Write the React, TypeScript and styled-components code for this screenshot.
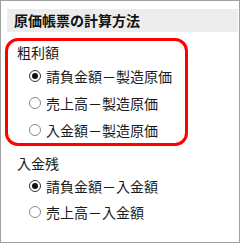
import React from 'react';
import styled, { createGlobalStyle } from 'styled-components';

const GlobalStyle = createGlobalStyle`
  html,
  body {
    margin: 0;
    padding: 0;
    background: #ffffff;
  }
  body {
    font-family: 'Noto Sans CJK JP', 'Noto Sans', sans-serif;
    color: #1a1a1a;
  }
`;

interface Option {
  label: string;
  checked?: boolean;
}

interface GroupData {
  title: string;
  options: Option[];
  highlight?: boolean;
}

const groups: GroupData[] = [
  {
    title: '粗利額',
    highlight: true,
    options: [
      { label: '請負金額－製造原価', checked: true },
      { label: '売上高－製造原価' },
      { label: '入金額－製造原価' },
    ],
  },
  {
    title: '入金残',
    options: [{ label: '請負金額－入金額', checked: true }, { label: '売上高－入金額' }],
  },
];

function App() {
  return (
    <>
      <GlobalStyle />
      <Frame>
        <Header>原価帳票の計算方法</Header>
        {groups.map((g) =>
          g.highlight ? (
            <Highlight key={g.title}>
              <GroupTitle>{g.title}</GroupTitle>
              {g.options.map((o) => (
                <Row key={o.label}>
                  <Radio $checked={o.checked} />
                  <span>{o.label}</span>
                </Row>
              ))}
            </Highlight>
          ) : (
            <Plain key={g.title}>
              <GroupTitle $plain>{g.title}</GroupTitle>
              {g.options.map((o) => (
                <Row key={o.label} $plain>
                  <Radio $checked={o.checked} />
                  <span>{o.label}</span>
                </Row>
              ))}
            </Plain>
          ),
        )}
      </Frame>
    </>
  );
}

// Styles
const Frame = styled.div`
  box-sizing: border-box;
  width: 240px;
  height: 243px;
  border: 1px solid #a0a0a0;
  padding: 8px 1px 0 4px;
  display: flex;
  flex-direction: column;
  overflow: hidden;
`;

const Header = styled.div`
  margin-left: 2px;
  height: 23px;
  line-height: 23px;
  padding-left: 7px;
  background: #ececec;
  font-size: 14px;
  font-weight: 700;
  color: #111;
`;

const Highlight = styled.div`
  box-sizing: border-box;
  width: 183px;
  margin-top: 6px;
  border: 3px solid #ff0000;
  border-radius: 13px;
  display: flex;
  flex-direction: column;
`;

const Plain = styled.div`
  margin-top: 7px;
  display: flex;
  flex-direction: column;
`;

const GroupTitle = styled.div<{ $plain?: boolean }>`
  padding: ${(p) => (p.$plain ? '0 0 0 12px' : '2px 0 0 9px')};
  font-size: 14px;
  line-height: ${(p) => (p.$plain ? '20px' : '19px')};
`;

const Row = styled.div<{ $plain?: boolean }>`
  height: ${(p) => (p.$plain ? '26px' : '27px')};
  display: flex;
  align-items: center;
  gap: 5px;
  padding-left: ${(p) => (p.$plain ? '24px' : '21px')};
  font-size: 14px;
`;

const Radio = styled.span<{ $checked?: boolean }>`
  box-sizing: border-box;
  width: 12px;
  height: 12px;
  border-radius: 50%;
  border: 1px solid ${(p) => (p.$checked ? '#333' : '#888')};
  background: #fff;
  display: flex;
  align-items: center;
  justify-content: center;
  flex-shrink: 0;
  &::after {
    content: '';
    width: 6px;
    height: 6px;
    border-radius: 50%;
    background: #111;
    display: ${(p) => (p.$checked ? 'block' : 'none')};
  }
`;

export default App;
